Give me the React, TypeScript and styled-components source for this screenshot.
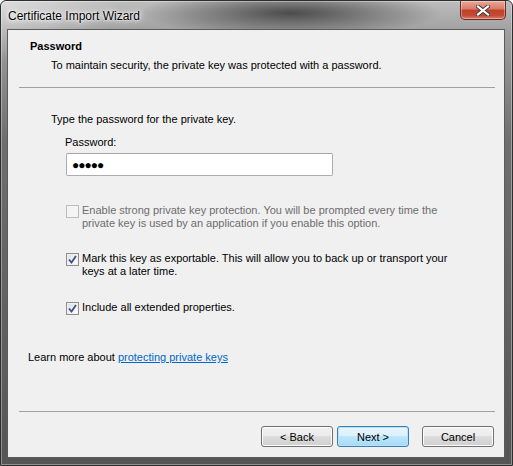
import React from "react";
import styled, { createGlobalStyle } from "styled-components";

const GlobalStyle = createGlobalStyle`
  html, body {
    margin: 0;
    padding: 0;
    background: #ffffff;
  }
  body {
    font-family: "Liberation Sans", Arial, sans-serif;
    font-size: 11px;
    color: #000;
  }
`;

const Frame = styled.div`
  width: 513px;
  height: 466px;
  box-sizing: border-box;
  border: 1px solid #2e2e2e;
  border-radius: 6px 6px 0 0;
  display: flex;
  flex-direction: column;
  padding: 0 7px 7px 6px;
  background:
    radial-gradient(ellipse 150px 24px at 290px 12px, rgba(50, 50, 50, 0.8), rgba(50, 50, 50, 0) 100%),
    radial-gradient(ellipse 120px 60px at 0px 0px, rgba(235, 235, 235, 0.7), rgba(235, 235, 235, 0) 100%),
    linear-gradient(180deg, #bdbdbd 0px, #a0a0a0 30px, #6e6e6e 140px, #555555 466px);
  box-shadow: inset 0 0 0 1px rgba(255, 255, 255, 0.35);
`;

const TitleBar = styled.div`
  height: 28px;
  display: flex;
  align-items: flex-start;
  justify-content: space-between;
`;

const Title = styled.div`
  font-family: "Liberation Sans", Arial, sans-serif;
  font-size: 12px;
  line-height: 14px;
  margin-top: 8px;
  margin-left: 1px;
  color: #000;
  text-shadow: 0 0 8px #fff, 0 0 4px #fff, 0 0 2px #fff;
`;

const CloseButton = styled.div`
  width: 46px;
  height: 19px;
  box-sizing: border-box;
  margin-right: -1px;
  border: 1px solid #6b2a22;
  border-top: none;
  border-radius: 0 0 5px 5px;
  background: linear-gradient(180deg, #e9a99a 0%, #d77a66 45%, #c0402a 50%, #c44a32 80%, #d9806a 100%);
  box-shadow: inset 0 0 0 1px rgba(255, 255, 255, 0.35);
  display: flex;
  align-items: center;
  justify-content: center;
`;

const Client = styled.div`
  flex: 1;
  border: 1px solid #5b5b5b;
  background: #f0f0f0;
  display: flex;
  flex-direction: column;
`;

const HeaderTitle = styled.div`
  font-weight: bold;
  line-height: 13px;
  margin: 10px 0 0 22px;
`;

const HeaderText = styled.div`
  line-height: 13px;
  margin: 6px 0 0 43px;
`;

const Separator = styled.div<{ $top: number }>`
  height: 1px;
  background: #a0a0a0;
  margin: ${(p) => p.$top}px 9px 0 11px;
`;

const Text = styled.div<{ $top: number; $left: number }>`
  line-height: 13px;
  margin: ${(p) => p.$top}px 0 0 ${(p) => p.$left}px;
`;

const PasswordInput = styled.div`
  width: 267px;
  height: 23px;
  box-sizing: border-box;
  margin: 4px 0 0 58px;
  border: 1px solid #abadb3;
  border-top-color: #a4a6ab;
  border-radius: 2px;
  background: #fff;
  display: flex;
  align-items: center;
  padding-left: 5px;
  font-size: 12px;
  letter-spacing: -1px;
`;

const CheckRow = styled.label<{ $top: number; $disabled?: boolean }>`
  display: flex;
  align-items: flex-start;
  gap: 3px;
  margin: ${(p) => p.$top}px 0 0 58px;
  line-height: 13px;
  color: ${(p) => (p.$disabled ? "#6d6d6d" : "#000")};
`;

const Box = styled.span<{ $disabled?: boolean }>`
  flex: none;
  width: 13px;
  height: 13px;
  box-sizing: border-box;
  margin-top: 1px;
  border: 1px solid ${(p) => (p.$disabled ? "#bcbcbc" : "#8e8f8f")};
  background: ${(p) =>
    p.$disabled
      ? "#f4f4f4"
      : "linear-gradient(135deg, #dcdcdc 0%, #f4f4f4 60%, #ffffff 100%)"};
  box-shadow: inset 0 0 0 1px ${(p) => (p.$disabled ? "#f4f4f4" : "#f0f0f0")};
  display: flex;
  align-items: center;
  justify-content: center;
`;

const Link = styled.a`
  color: #0066cc;
  text-decoration: underline;
`;

const Footer = styled.div`
  margin-top: auto;
  display: flex;
  flex-direction: column;
  padding-bottom: 10px;
`;

const Buttons = styled.div`
  display: flex;
  justify-content: flex-end;
  margin: 14px 10px 0 0;
`;

const Button = styled.button<{ $default?: boolean; $gap?: number }>`
  width: 72px;
  height: 21px;
  margin-left: ${(p) => p.$gap ?? 0}px;
  padding: 0;
  box-sizing: border-box;
  font-family: "Liberation Sans", Arial, sans-serif;
  font-size: 11px;
  color: #000;
  border: 1px solid ${(p) => (p.$default ? "#3c7fb1" : "#707070")};
  border-radius: 3px;
  background: ${(p) =>
    p.$default
      ? "linear-gradient(180deg, #eaf6fd 0%, #d9f0fc 50%, #bee6fd 50%, #a7d9f5 100%)"
      : "linear-gradient(180deg, #f2f2f2 0%, #ebebeb 50%, #dddddd 50%, #cfcfcf 100%)"};
  box-shadow: inset 0 0 0 1px ${(p) => (p.$default ? "#b8e2f9" : "#fcfcfc")};
`;

const Check = () => (
  <svg width="9" height="9" viewBox="0 0 9 9">
    <path d="M1 4.5 L3.5 7.5 L8 1" fill="none" stroke="#3d4f8a" strokeWidth="1.8" />
  </svg>
);

const CloseIcon = () => (
  <svg width="14" height="11" viewBox="0 0 14 11">
    <path d="M2 1.5 L12 9.5 M12 1.5 L2 9.5" stroke="#3a3a3a" strokeWidth="4" strokeLinecap="square" />
    <path d="M2 1.5 L12 9.5 M12 1.5 L2 9.5" stroke="#ffffff" strokeWidth="2.2" strokeLinecap="square" />
  </svg>
);

const App = () => {
  return (
    <>
      <GlobalStyle />
      <Frame>
        <TitleBar>
          <Title>Certificate Import Wizard</Title>
          <CloseButton>
            <CloseIcon />
          </CloseButton>
        </TitleBar>
        <Client>
          <HeaderTitle>Password</HeaderTitle>
          <HeaderText>To maintain security, the private key was protected with a password.</HeaderText>
          <Separator $top={15} />

          <Text $top={25} $left={43}>Type the password for the private key.</Text>
          <Text $top={10} $left={57}>Password:</Text>
          <PasswordInput>●●●●●</PasswordInput>

          <CheckRow $top={28} $disabled>
            <Box $disabled />
            <span>
              Enable strong private key protection. You will be prompted every time the
              <br />
              private key is used by an application if you enable this option.
            </span>
          </CheckRow>
          <CheckRow $top={22}>
            <Box>
              <Check />
            </Box>
            <span>
              Mark this key as exportable. This will allow you to back up or transport your
              <br />
              keys at a later time.
            </span>
          </CheckRow>
          <CheckRow $top={23}>
            <Box>
              <Check />
            </Box>
            <span>Include all extended properties.</span>
          </CheckRow>

          <Text $top={36} $left={20}>
            Learn more about <Link href="#">protecting private keys</Link>
          </Text>

          <Footer>
            <Separator $top={0} />
            <Buttons>
              <Button>&lt; Back</Button>
              <Button $default $gap={4}>Next &gt;</Button>
              <Button $gap={13}>Cancel</Button>
            </Buttons>
          </Footer>
        </Client>
      </Frame>
    </>
  );
};

export default App;
